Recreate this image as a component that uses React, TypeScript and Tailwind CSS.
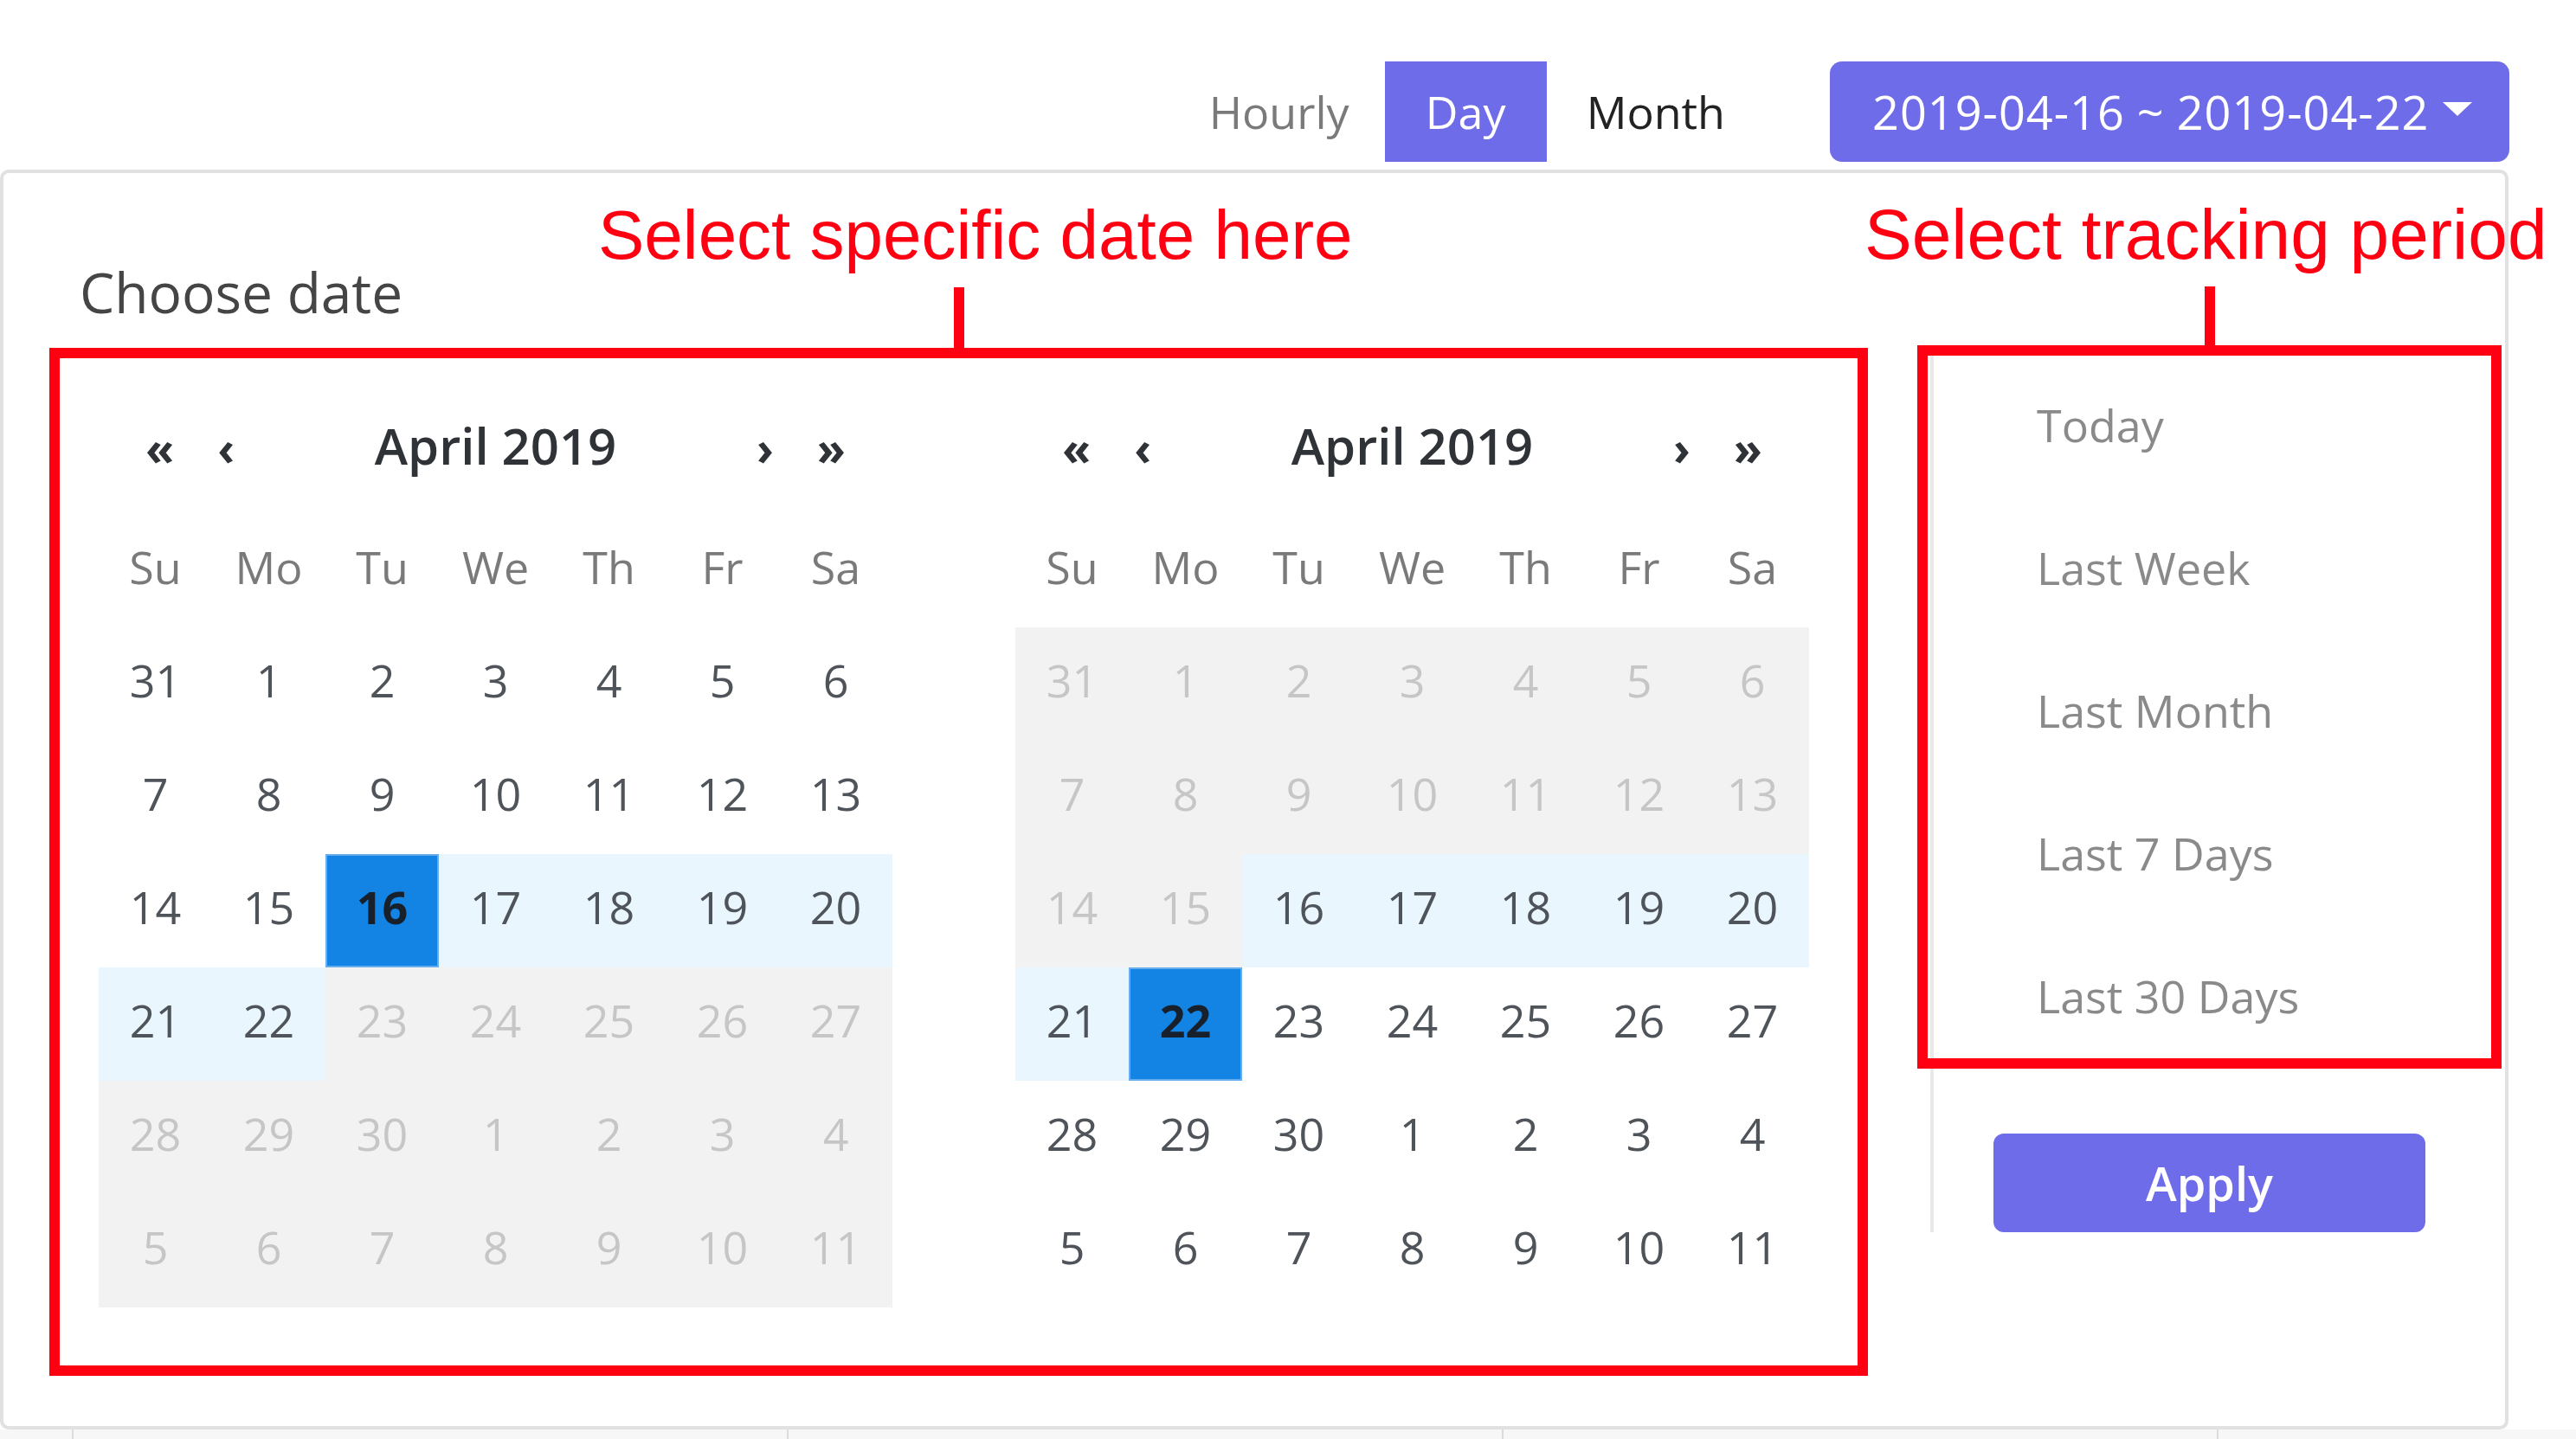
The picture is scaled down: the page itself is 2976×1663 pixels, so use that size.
const WEEKDAYS = ["Su", "Mo", "Tu", "We", "Th", "Fr", "Sa"];

// n = normal, r = in range, s = selected, d = disabled
const LEFT = [
    { days: [31, 1, 2, 3, 4, 5, 6], states: "nnnnnnn" },
    { days: [7, 8, 9, 10, 11, 12, 13], states: "nnnnnnn" },
    { days: [14, 15, 16, 17, 18, 19, 20], states: "nnsrrrr" },
    { days: [21, 22, 23, 24, 25, 26, 27], states: "rrddddd" },
    { days: [28, 29, 30, 1, 2, 3, 4], states: "ddddddd" },
    { days: [5, 6, 7, 8, 9, 10, 11], states: "ddddddd" },
];

const RIGHT = [
    { days: [31, 1, 2, 3, 4, 5, 6], states: "ddddddd" },
    { days: [7, 8, 9, 10, 11, 12, 13], states: "ddddddd" },
    { days: [14, 15, 16, 17, 18, 19, 20], states: "ddrrrrr" },
    { days: [21, 22, 23, 24, 25, 26, 27], states: "rsnnnnn" },
    { days: [28, 29, 30, 1, 2, 3, 4], states: "nnnnnnn" },
    { days: [5, 6, 7, 8, 9, 10, 11], states: "nnnnnnn" },
];

const RANGES = ["Today", "Last Week", "Last Month", "Last 7 Days", "Last 30 Days"];

function Cell({ day, state }: { day: number; state: string }) {
    const cls =
        state === "s"
            ? "bg-[#1384e4] border-[2px] border-[#68acee] text-[#17202b] font-bold"
            : state === "r"
              ? "bg-[#e9f6fe] text-[#4f545a]"
              : state === "d"
                ? "bg-[#f2f2f2] text-[#c6c6c6]"
                : "text-[#4f545a]";
    return (
        <div className={`flex h-[131px] w-[131px] items-center justify-center pb-[10px] text-[52px] ${cls}`}>
            {day}
        </div>
    );
}

function Calendar({ rows }: { rows: { days: number[]; states: string }[] }) {
    return (
        <div className="w-[917px]">
            {/* Header */}
            <div className="flex h-[120px] items-center pb-[8px] text-[#2f3338]">
                <div className="flex w-[200px] items-center pl-[54px] pt-[6px]">
                    <span className="text-[54px] font-bold">«</span>
                    <span className="ml-[50px] text-[54px] font-bold">‹</span>
                </div>
                <div className="flex-1 text-center text-[58px] font-semibold">April 2019</div>
                <div className="flex w-[200px] items-center justify-end pr-[54px] pt-[6px]">
                    <span className="text-[54px] font-bold">›</span>
                    <span className="ml-[50px] text-[54px] font-bold">»</span>
                </div>
            </div>
            {/* Weekdays */}
            <div className="flex h-[147px] items-center pt-[6px]">
                {WEEKDAYS.map((w) => (
                    <div key={w} className="w-[131px] text-center text-[52px] text-[#7a7a7a]">
                        {w}
                    </div>
                ))}
            </div>
            {/* Days */}
            {rows.map((row, i) => (
                <div key={i} className="flex">
                    {row.days.map((d, j) => (
                        <Cell key={j} day={d} state={row.states[j]} />
                    ))}
                </div>
            ))}
        </div>
    );
}

export default function App() {
    return (
        <div className="relative h-[1663px] w-[2976px] overflow-hidden bg-white font-['Open_Sans',sans-serif]">
            {/* Top bar */}
            <div className="flex h-[196px] items-start justify-end pr-[77px] pt-[71px]">
                <div className="flex h-[116px] items-stretch text-[52px]">
                    <button className="px-[41px] text-[#7a7a7a]">Hourly</button>
                    <button className="w-[187px] bg-[#6e6ce9] text-white">Day</button>
                    <button className="px-[46px] text-[#222]">Month</button>
                </div>
                <button className="ml-[75px] flex h-[116px] w-[785px] items-center rounded-[14px] bg-[#6e6ce9] pl-[49px] text-[54px] tracking-[1px] text-white">
                    <span>2019-04-16</span>
                    <span className="mx-[14px]">~</span>
                    <span>2019-04-22</span>
                    <svg className="ml-[16px] mt-[-6px]" width="34" height="16" viewBox="0 0 34 16">
                        <path d="M0 0 L34 0 L17 16 Z" fill="#fff" />
                    </svg>
                </button>
            </div>

            {/* Panel */}
            <div className="mr-[78px] flex h-[1456px] rounded-[10px] border-[4px] border-[#e1e1e1] bg-white">
                <div className="w-[2226px] pl-[88px]">
                    <div className="mt-[98px] flex h-[80px] items-center text-[64px] text-[#454545]">Choose date</div>
                    <div className="mt-[80px] flex gap-[142px] pl-[22px]">
                        <Calendar rows={LEFT} />
                        <Calendar rows={RIGHT} />
                    </div>
                </div>
                <div className="mt-[208px] self-start border-l-[4px] border-[#e8e8e8]">
                    <div className="w-[600px]">
                        {RANGES.map((r) => (
                            <div key={r} className="flex h-[165px] items-center pl-[119px] text-[52px] text-[#8a8a8a]">
                                {r}
                            </div>
                        ))}
                    </div>
                    <div className="pl-[69px] pt-[77px]">
                        <button className="h-[114px] w-[499px] rounded-[12px] bg-[#6e6ce9] text-[54px] font-semibold text-white">
                            Apply
                        </button>
                    </div>
                </div>
            </div>

            {/* Table header peeking below */}
            <div className="flex h-[11px] bg-[#f7f7f7] pl-[83px]">
                {[0, 1, 2, 3].map((i) => (
                    <div key={i} className="w-[826px] shrink-0 border-l-[2px] border-[#dcdcdc]" />
                ))}
            </div>

            {/* Annotations */}
            <div className="absolute left-[691px] top-[232px] font-['Liberation_Sans',sans-serif] text-[80px] leading-none text-[#ff0013]">
                Select specific date here
            </div>
            <div className="absolute left-[2154px] top-[230px] font-['Liberation_Sans',sans-serif] text-[82px] leading-none text-[#ff0013]">
                Select tracking period
            </div>
            <div className="absolute left-[1102px] top-[332px] h-[72px] w-[12px] bg-[#ff0013]" />
            <div className="absolute left-[2547px] top-[331px] h-[70px] w-[12px] bg-[#ff0013]" />
            <div className="absolute left-[57px] top-[402px] h-[1188px] w-[2101px] border-[12px] border-[#ff0013]" />
            <div className="absolute left-[2215px] top-[399px] h-[836px] w-[675px] border-[12px] border-[#ff0013]" />
        </div>
    );
}
